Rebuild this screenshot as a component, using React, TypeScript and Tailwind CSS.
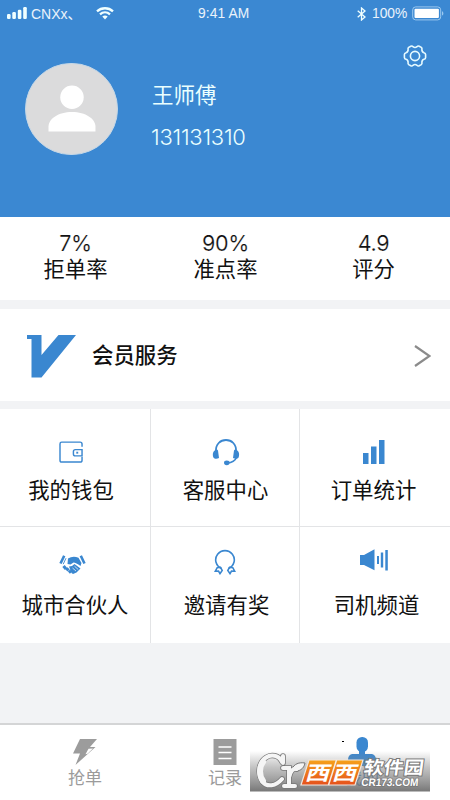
import React from "react";

const BLUE = "#3a87d0";

function StatusBar() {
  return (
    <div className="flex h-[27px] items-center text-[13.5px] leading-none text-white/90">
      <svg className="ml-[7px] h-[13px] w-[21px] shrink-0" viewBox="0 0 21 13" fill="#f0ffff">
        <rect x="0" y="7" width="3.6" height="5" rx="1.2" />
        <rect x="5.3" y="5" width="3.6" height="7" rx="1.2" />
        <rect x="10.8" y="2.8" width="3.6" height="9.2" rx="1.2" />
        <rect x="16.2" y="0" width="3.6" height="12" rx="1.2" />
      </svg>
      <span className="ml-[3px] w-[64px] whitespace-nowrap pt-px text-[14px]">CNXx、</span>
      <svg className="ml-[1px] h-[13px] w-[18px] shrink-0" viewBox="0 0 18 13" fill="none" stroke="#f0ffff" strokeWidth="2.3">
        <path d="M1 4.3C5.5.2 12.5.2 17 4.3" />
        <path d="M4 7.4c2.9-2.6 7.1-2.6 10 0" />
        <path d="M6.3 9.6c1.6-1.4 3.8-1.4 5.4 0L9 12.4z" fill="#f0ffff" stroke="none" />
      </svg>
      <span className="ml-[84px] w-[62px] whitespace-nowrap pt-px text-[13.8px] tracking-[0.1px]">9:41 AM</span>
      <svg className="ml-[97px] h-[14px] w-[9px] shrink-0" viewBox="0 0 9 14" fill="none" stroke="#f0ffff" strokeWidth="1.3">
        <path d="M.7 3.7 8 10 4.5 13V1L8 4 .7 10.3" />
      </svg>
      <span className="ml-[6px] w-[36px] whitespace-nowrap text-[13.8px]">100%</span>
      <svg className="ml-[4px] h-[15px] w-[32px] shrink-0" viewBox="0 0 32 15">
        <rect x=".7" y=".9" width="28" height="13" rx="3" fill="none" stroke="#9bc8ef" />
        <rect x="2.5" y="2.7" width="24.4" height="9.4" rx="1" fill="#fff" />
        <path d="M30 5.2c1.8.6 1.8 3.8 0 4.4z" fill="#9bc8ef" />
      </svg>
    </div>
  );
}

function Gear() {
  return (
    <svg className="h-[24px] w-[24px]" viewBox="-12 -12 24 24" fill="none" stroke="#e6faff" strokeWidth="1.6" strokeLinejoin="round">
      <path d="M-4.200-9.800Q-2.800-10.300-2-9.300Q0-7.800 2-9.300Q2.800-10.300 4.200-9.800L6.300-8.600Q7.300-7.700 6.900-6.500Q6.800-4 9-3.300Q10.600-2.900 10.600-1.400V1.400Q10.600 2.900 9 3.300Q6.800 4 6.900 6.500Q7.300 7.700 6.300 8.600L4.200 9.800Q2.800 10.300 2 9.300Q0 7.800-2 9.300Q-2.800 10.300-4.200 9.800L-6.300 8.600Q-7.300 7.700-6.900 6.500Q-6.800 4-9 3.300Q-10.600 2.900-10.600 1.400V-1.400Q-10.600-2.900-9-3.300Q-6.800-4-6.900-6.500Q-7.300-7.700-6.300-8.600Z" />
      <circle r="4.6" />
    </svg>
  );
}

function Stat({ value, label }: { value: string; label: string }) {
  return (
    <div className="flex flex-col items-center pt-[14px]">
      <span className="h-[25px] text-[21.5px] leading-[25px] tracking-[-0.4px] [-webkit-text-stroke:0.2px_white]">{value}</span>
      <span className="h-[27px] text-[21.3px] leading-[27px]">{label}</span>
    </div>
  );
}

function Wallet() {
  return (
    <svg className="h-[23px] w-[25px]" viewBox="0 0 26 24" fill="none" stroke={BLUE} strokeWidth="1.5">
      <path d="M24 6V3.2Q24 1.2 22 1.2H2.8Q1 1.2 1 3v17Q1 22 2.8 22H22q2 0 2-2v-3.5" />
      <path d="M24 9h-7q-2 0-2 2v2.5q0 2 2 2h7z" />
      <path d="M18 12.200h2" strokeWidth="2" />
    </svg>
  );
}

function Headset() {
  return (
    <svg className="h-[27px] w-[28px]" viewBox="0 0 28 27" fill={BLUE}>
      <path d="M4 13C2.5-3 25.500-3 24 13" fill="none" stroke={BLUE} strokeWidth="1.8" />
      <path d="M4 10.500C1 12 .2 15 1.400 18.500c1.200 1.700 3.500 1.600 5.600.6L6 11.500c-.4-1-1.200-1.300-2-1zM24 10.500c3 1.500 3.800 4.500 2.600 8-1.200 1.700-3.500 1.600-5.600.6l1-7.600c.4-1 1.200-1.300 2-1z" />
      <path d="M25 17.500c-1.500 4-5 6.300-10 6.600" fill="none" stroke={BLUE} strokeWidth="1.5" />
      <ellipse cx="14.8" cy="23.800" rx="2.800" ry="2.400" />
    </svg>
  );
}

function Bars() {
  return (
    <svg className="h-[24px] w-[22px]" viewBox="0 0 22 24" fill={BLUE}>
      <rect y="13" width="5.500" height="11" />
      <rect x="8" y="6.500" width="5.500" height="17.500" />
      <rect x="16" width="5.500" height="24" />
    </svg>
  );
}

function Handshake() {
  return (
    <svg className="mr-[6px] mt-[2px] h-[20px] w-[27px]" viewBox="0 0 27 20">
      <path d="M5.200.8 1.500 8.500M21.800.8 25.500 8.500" stroke={BLUE} strokeWidth="2.600" fill="none" />
      <path d="M9 3.500Q14 .5 19.500 2.800L22.500 8 21.500 11Q17 7.500 14.500 7.500L11.500 9.500 8.500 9z" fill={BLUE} />
      <path d="M7 3.200 4.200 9.200" stroke={BLUE} strokeWidth=".9" />
      <path d="M4.500 11l2.500 3M7.500 13.200l2 2.300M10 15.500l2 2.200" stroke={BLUE} strokeWidth="3" />
      <path d="M10 11.500l3-.5 2.500-2 6 4.500-4 4-3.500 1.500-1.500-1z" fill={BLUE} />
      <path d="M13.500 13l3.500 3M15.500 11.200l3.700 3.300" stroke="#fff" strokeWidth=".7" />
    </svg>
  );
}

function Medal() {
  return (
    <svg className="h-[26px] w-[22px]" viewBox="0 0 22 26" fill="none" stroke={BLUE} strokeWidth="1.600">
      <path d="M7.500 19.500A9.300 9.300 0 1 1 14.500 19.500" />
      <path d="M6.500 18.300l-3.300.4-1.900 3.500 3.200-.2 1.500 2.600 2.200-3.200zM15.500 18.300l3.300.4 1.900 3.500-3.200-.2-1.500 2.600-2.200-3.200z" />
    </svg>
  );
}

function Speaker() {
  return (
    <svg className="h-[22px] w-[28px]" viewBox="0 0 28 22" fill={BLUE}>
      <path d="M0 6h4L14.500.2v21L4 16H0z" />
      <rect x="17" y="7" width="2" height="8" />
      <rect x="20.800" y="3.500" width="2.400" height="15" />
      <rect x="25.300" y="1" width="2.500" height="20.500" />
    </svg>
  );
}

function Tile({ icon, label, className }: { icon: React.ReactNode; label: string; className: string }) {
  return (
    <div className={`flex flex-col items-center border-[#e3e4e6] ${className}`}>
      <div className="flex h-[30px] items-center">{icon}</div>
      <span className="whitespace-nowrap text-[21.400px] leading-[28px]">{label}</span>
    </div>
  );
}

function Watermark() {
  const letters = "M32 13C29 6 21 5 16 8.500 9 13 7 24 12 32c5 7 14 5 20-2M33 7v7M33 19h6v17M34 37h11M39.500 27c1-5 4-8 7-7";
  return (
    <svg className="absolute left-[10px] top-[24px] h-[44px] w-[182px]" viewBox="0 0 182 44">
      <defs>
        <linearGradient id="shade" x1="0" y1="0" x2="0" y2="1">
          <stop offset="0" stopColor="#888" stopOpacity="0" />
          <stop offset=".4" stopColor="#888" stopOpacity=".5" />
          <stop offset="1" stopColor="#707070" stopOpacity=".95" />
        </linearGradient>
        <linearGradient id="flame" x1="0" y1="0" x2="0" y2="1">
          <stop offset="0" stopColor="#f6a21b" />
          <stop offset="1" stopColor="#e5501c" />
        </linearGradient>
      </defs>
      <rect y="2" width="180" height="40.500" fill="url(#shade)" />
      <path d={letters} fill="none" stroke="#777" strokeWidth="5.600" strokeLinecap="round" />
      <path d="M42 20c2-5 7-7 13-6-1 6-6 9-12 8z" fill="#f5f5f5" stroke="#777" />
      <path d={letters} fill="none" stroke="#f5f5f5" strokeWidth="4" strokeLinecap="round" />
      <path d="M13 13C9 18 9 26 13 32" fill="none" stroke="#f5f5f5" strokeWidth="6" strokeLinecap="round" />
      <path d="M59 11h54l-8 25H51z" fill="url(#flame)" stroke="#f1e7df" strokeWidth="1.200" />
      <path d="M86.500 11 78.500 36" stroke="#f7ede5" strokeWidth="1.500" />
      <g fill="#fff" fontFamily="'Noto Sans CJK SC', sans-serif" fontWeight="700">
        <text transform="translate(54.500 31) skewX(-16) scale(1.250 1)" fontSize="19.500">西</text>
        <text transform="translate(81.500 31) skewX(-16) scale(1.250 1)" fontSize="19.500">西</text>
        <text transform="translate(113 25) skewX(-8)" fontSize="18" textLength="60" lengthAdjust="spacingAndGlyphs" stroke="#777" strokeWidth="1.800" paintOrder="stroke">软件园</text>
      </g>
      <text transform="translate(111 37) skewX(-6)" fill="#fff" stroke="#777" strokeWidth="1.500" paintOrder="stroke" fontFamily="'Liberation Sans', sans-serif" fontWeight="700" fontSize="11" textLength="57" lengthAdjust="spacingAndGlyphs">CR173.COM</text>
    </svg>
  );
}

export default function App() {
  return (
    <div className="flex h-[800px] w-[450px] flex-col overflow-hidden bg-[#f2f3f5] font-['Inter','Noto_Sans_CJK_SC',sans-serif] text-[#111]">
      <header className="h-[217px] shrink-0 bg-[#3b88d2] font-['Liberation_Sans','Noto_Sans_CJK_SC',sans-serif]">
        <StatusBar />
        <div className="flex h-[127px] text-[#eaffff]">
          <div className="ml-[25px] mt-[36px] h-[92px] w-[93px] shrink-0 overflow-hidden rounded-full border border-[#c4d7e7] bg-[#dbdbdc]">
            <svg viewBox="0 0 93 92" fill="#fff">
              <circle cx="47" cy="34" r="12" />
              <path d="M23 69v-5c0-8 10-15 24-15s24 7 24 15v5z" />
            </svg>
          </div>
          <div className="ml-[33px] mt-[54px] flex w-[240px] flex-col">
            <span className="ml-px h-[30px] text-[21.500px] font-normal leading-[30px]">王师傅</span>
            <span className="mt-[11px] h-[30px] font-['Inter',sans-serif] text-[22px] font-light leading-[30px] tracking-[-0.250px]">131131310</span>
          </div>
          <div className="ml-[12px] mt-[17px]"><Gear /></div>
        </div>
      </header>

      <section className="grid h-[83px] shrink-0 grid-cols-[151px_149px_147px] bg-white">
        <Stat value="7%" label="拒单率" />
        <Stat value="90%" label="准点率" />
        <Stat value="4.9" label="评分" />
      </section>

      <section className="mt-[9px] flex h-[92px] shrink-0 items-center bg-white">
        <svg className="ml-[27px] mt-[2px] h-[43px] w-[49px]" viewBox="0 0 49 43" fill={BLUE}>
          <path d="M0 0h14.500v20L31.500 0H49L14.500 42.500H4.500V4H0z" />
        </svg>
        <span className="ml-[16px] flex-1 text-[21.400px] font-medium leading-[30px]">会员服务</span>
        <svg className="mr-[19px] mt-[2px] h-[22px] w-[17px]" viewBox="0 0 17 22" fill="none" stroke="#8b8b8b" strokeWidth="2.200">
          <path d="M1 1l14.500 10L1 21" />
        </svg>
      </section>

      <section className="mt-[8px] grid h-[234px] shrink-0 grid-cols-[151px_149px_150px] grid-rows-[118px_116px] bg-white">
        <Tile icon={<Wallet />} label="我的钱包" className="border-b border-r pr-[8px] pt-[28px] [&>span]:mt-[9px]" />
        <Tile icon={<Headset />} label="客服中心" className="border-b border-r pl-px pt-[28px] [&>span]:mt-[9px]" />
        <Tile icon={<Bars />} label="订单统计" className="border-b pr-[3px] pt-[28px] [&>span]:mt-[9px]" />
        <Tile icon={<Handshake />} label="城市合伙人" className="border-r pt-[22px] [&>span]:mt-[12px]" />
        <Tile icon={<Medal />} label="邀请有奖" className="border-r pl-[3px] pt-[20px] [&>span]:mt-[14px] [&>div]:mr-[3px]" />
        <Tile icon={<Speaker />} label="司机频道" className="pl-[3px] pt-[18px] [&>div]:mr-[5px] [&>span]:mt-[16px]" />
      </section>

      <nav className="mt-auto flex h-[77px] shrink-0 border-t-2 border-[#d4d5d6] bg-white text-[17px] leading-[24px] text-[#9b9b9b]">
        <div className="flex w-[170px] flex-col items-center pt-[13px]">
          <svg className="h-[28px] w-[25px]" viewBox="0 0 25 28" fill="#9c9c9c">
            <path d="M7 1h17l-7 8h5.500L2.500 27 7 15.500H0z" />
            <path d="m15.500 10.800 4.500-.3-5.500 5.300-2 .5z" fill="#fff" />
          </svg>
          <span>抢单</span>
        </div>
        <div className="flex w-[110px] flex-col items-center pt-[13px]">
          <svg className="h-[28px] w-[24px]" viewBox="0 0 24 28">
            <path d="M.5 1h23v26H.5z" fill="#9c9c9c" />
            <path d="M5.500 9h13M5.500 14.500h13M5.500 20.500h13" stroke="#fff" strokeWidth="1.400" />
          </svg>
          <span>记录</span>
        </div>
        <div className="relative flex w-[170px] flex-col items-center text-[#3a87d0]">
          <svg className="mr-[6px] mt-[12px] h-[29px] w-[28px]" viewBox="0 0 28 29" fill={BLUE}>
            <rect x="8.500" width="11.500" height="15" rx="5.500" />
            <path d="M11 14h6v3h7q4 1 4 6v6H0v-6q0-5 4-6h7z" />
          </svg>
          <span className="mr-[6px]">我的</span>
          <div className="absolute left-[62px] top-[16px] h-px w-[2px] bg-black" />
          <div className="absolute -left-[40px] top-0"><Watermark /></div>
        </div>
      </nav>
    </div>
  );
}
